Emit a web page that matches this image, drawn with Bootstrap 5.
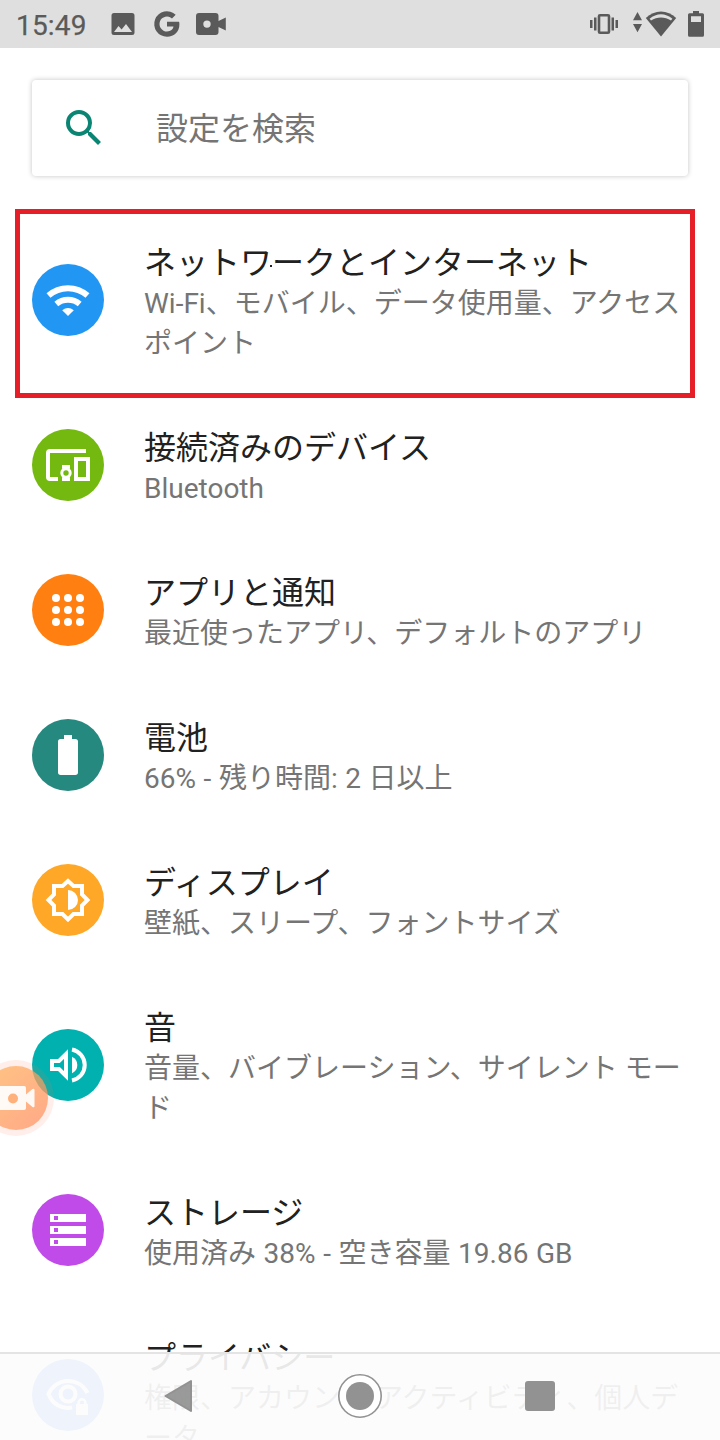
<!DOCTYPE html>
<html lang="ja">
<head>
<meta charset="utf-8">
<meta name="viewport" content="width=device-width, initial-scale=1">
<title>設定</title>
<link href="https://cdn.jsdelivr.net/npm/bootstrap@5.3.0/dist/css/bootstrap.min.css" rel="stylesheet">
<style>
body{font-family:Roboto,"Noto Sans CJK JP",sans-serif;background:#fff;color:#212121}
.screen{width:720px;height:1440px}
.statusbar{height:48px;background:#dfdfdf;color:#5a5a5a;padding:0 12px 0 16px}
.clock{font-size:28px;line-height:48px;font-weight:400;letter-spacing:.2px;width:95px;padding-top:3px;-webkit-text-stroke:.25px #5a5a5a}
svg{display:block;flex:none}
.searchbox{height:96px;margin:32px 32px 32px;border-radius:4px;box-shadow:0 0 5px rgba(0,0,0,.24);font-size:32px;color:#757575;padding-left:28px}
.searchbox svg{margin-right:48px}
.searchbox span{padding-top:2px}
.entry{padding-left:32px;height:145px}
.entry.tall{height:185px}
.disc{width:72px;height:72px;margin:0 40px 1px 0;flex:none;color:#fff}
.words{align-self:flex-start;padding-top:35px;white-space:nowrap}
.ttl{font-size:32px;line-height:40px;margin-bottom:1px}
.sub{font-size:28px;line-height:40px;color:#757575}
.spaced{word-spacing:.65px}
.marker{left:15px;top:209px;width:680px;height:189px;border:5px solid #e61e28}
.speck{left:270px;top:265px;width:2px;height:2px;background:#222}
.bubble{left:-22px;top:1060px}
.sysnav{left:0;bottom:0;height:88px;background:rgba(252,252,252,.91);border-top:2px solid #e4e4e4}
.sysnav svg{width:180px}
</style>
</head>
<body>
<div class="screen position-relative overflow-hidden">
<header class="statusbar d-flex align-items-center">
  <div class="clock">15:49</div>
  <svg width="120" height="48" viewBox="111 0 120 48" fill="currentColor">
    <path fill-rule="evenodd" d="M114 13h18a2.500 2.500 0 0 1 2.500 2.500v17a2.500 2.500 0 0 1-2.500 2.500h-18a2.500 2.500 0 0 1-2.500-2.500v-17a2.500 2.500 0 0 1 2.500-2.500zM114 32h18l-6-8-4.400 5.600-3.100-3.600z"/>
    <path d="M167 21.700h12.100q.3 1.300.3 2.600c0 7.600-5.100 12.400-12.400 12.400a12.700 12.700 0 1 1 8.700-21.900l-3.700 3.600a7.500 7.500 0 1 0-5 13.100c3.900 0 6-2.100 6.500-4.900H167z"/>
    <path fill-rule="evenodd" d="M199 13h16.500a3 3 0 0 1 3 3v5l7.300-3.600v13.200l-7.300-3.600v5a3 3 0 0 1-3 3H199a3 3 0 0 1-3-3V16a3 3 0 0 1 3-3zm8 7.400a3.700 3.700 0 1 0 0 7.400 3.700 3.700 0 0 0 0-7.400z"/>
  </svg>
  <svg class="ms-auto" width="120" height="48" viewBox="588 0 120 48" fill="currentColor">
    <path d="M590 20h2.500v8H590zM594 17.500h2.500v13H594zM611.500 17.500h2.500v13h-2.500zM615.500 20h2.500v8h-2.500z"/>
    <rect x="599" y="15.300" width="10" height="17.400" rx="1" fill="none" stroke="currentColor" stroke-width="2.600"/>
    <path d="M637.500 12l4.500 8.300h-9zM637.500 32.300L633 24h9z"/>
    <path d="M661 36.500L645.800 18c8.800-8.700 21.600-8.700 30.400 0z"/>
    <path d="M649.600 18.800c6.900-6 15.900-6 22.800 0l-1.400 1.700c-6.300-3.900-13.700-3.900-20 0z" fill="#dfdfdf"/>
    <path fill-rule="evenodd" d="M693 11h6v2.300h3.500q1.500 0 1.500 1.500v20.500q0 1.500-1.500 1.500h-13q-1.500 0-1.500-1.500V14.800q0-1.500 1.500-1.500h3.500zM691 16.200V22h10v-5.800z"/>
  </svg>
</header>

<div class="searchbox bg-white d-flex align-items-center">
  <svg width="48" height="48" viewBox="0 0 24 24" fill="#0b8573"><path d="M15.500 14h-.79l-.28-.27A6.471 6.471 0 0 0 16 9.500 6.500 6.500 0 1 0 9.500 16c1.610 0 3.090-.59 4.230-1.570l.27.28v.79l5 4.990L20.490 19l-4.990-5zm-6 0C7.010 14 5 11.990 5 9.500S7.010 5 9.500 5 14 7.010 14 9.500 11.990 14 9.500 14z"/></svg>
  <span>設定を検索</span>
</div>

<main>
  <section class="entry tall d-flex align-items-center">
    <svg class="disc" viewBox="0 0 72 72"><circle cx="36" cy="36" r="36" fill="#2196f3"/><g fill="none" stroke="#fff" stroke-width="6"><path d="M16.500 31.500a29.500 29.500 0 0 1 39 0M24.300 40a18.500 18.500 0 0 1 23.400 0"/></g><path d="M36 52l-5.800-5.800q5.800-4.400 11.600 0z" fill="#fff"/></svg>
    <div class="words"><div class="ttl">ネットワークとインターネット</div><div class="sub">Wi-Fi、モバイル、データ使用量、アクセス<br>ポイント</div></div>
  </section>
  <section class="entry d-flex align-items-center">
    <svg class="disc" viewBox="0 0 72 72"><circle cx="36" cy="36" r="36" fill="#73b90f"/><g fill="none" stroke="#fff" stroke-width="4"><path d="M54 22H18a2 2 0 0 0-2 2v24a2 2 0 0 0 2 2h8"/><rect x="44" y="30" width="12" height="20"/><circle cx="34" cy="44" r="4.200" stroke-width="3"/></g><path d="M30 36h8v4q-4-2-8 0zM30 52h8v-4q-4 2-8 0z" fill="#fff"/></svg>
    <div class="words"><div class="ttl">接続済みのデバイス</div><div class="sub">Bluetooth</div></div>
  </section>
  <section class="entry d-flex align-items-center">
    <svg class="disc" viewBox="0 0 72 72"><circle cx="36" cy="36" r="36" fill="#ff7f11"/><g fill="#fff"><circle cx="24" cy="24" r="4"/><circle cx="36" cy="24" r="4"/><circle cx="48" cy="24" r="4"/><circle cx="24" cy="36" r="4"/><circle cx="36" cy="36" r="4"/><circle cx="48" cy="36" r="4"/><circle cx="24" cy="48" r="4"/><circle cx="36" cy="48" r="4"/><circle cx="48" cy="48" r="4"/></g></svg>
    <div class="words"><div class="ttl">アプリと通知</div><div class="sub">最近使ったアプリ、デフォルトのアプリ</div></div>
  </section>
  <section class="entry d-flex align-items-center">
    <svg class="disc" viewBox="0 0 72 72"><circle cx="36" cy="36" r="36" fill="#26897f"/><path d="M32 16h8v4h3.300a2.700 2.700 0 0 1 2.700 2.700v30.600a2.700 2.700 0 0 1-2.700 2.700H28.700a2.700 2.700 0 0 1-2.700-2.700V22.700a2.700 2.700 0 0 1 2.700-2.700H32z" fill="#fff"/></svg>
    <div class="words"><div class="ttl">電池</div><div class="sub spaced">66% - 残り時間: 2 日以上</div></div>
  </section>
  <section class="entry d-flex align-items-center">
    <svg class="disc" viewBox="0 0 72 72"><circle cx="36" cy="36" r="36" fill="#ffa726"/><path d="M36 17l5.500 5.000H50V30.500L55.500 36 50 41.500V50H41.500L36 55.500 30.500 50H22V41.500L16.500 36 22 30.500V22H30.500z" fill="none" stroke="#fff" stroke-width="4"/><path d="M36 26a10 10 0 0 1 0 20z" fill="#fff"/></svg>
    <div class="words"><div class="ttl">ディスプレイ</div><div class="sub">壁紙、スリープ、フォントサイズ</div></div>
  </section>
  <section class="entry tall d-flex align-items-center">
    <svg class="disc" viewBox="0 0 72 72"><circle cx="36" cy="36" r="36" fill="#00b1b0"/><path d="M20 32h7l7-7v22l-7-7h-7z" fill="none" stroke="#fff" stroke-width="4"/><path d="M40 27.800a9 9 0 0 1 0 16.400z" fill="#fff"/><path d="M40 20.500a15.800 15.800 0 0 1 0 31" fill="none" stroke="#fff" stroke-width="4"/></svg>
    <div class="words"><div class="ttl">音</div><div class="sub">音量、バイブレーション、サイレント モー<br>ド</div></div>
  </section>
  <section class="entry d-flex align-items-center">
    <svg class="disc" viewBox="0 0 72 72"><circle cx="36" cy="36" r="36" fill="#c04be8"/><path fill="#fff" fill-rule="evenodd" d="M18 20h36v8H18zM22 22v4h4v-4zM18 32h36v8H18zM22 34v4h4v-4zM18 44h36v8H18zM22 46v4h4v-4z"/></svg>
    <div class="words"><div class="ttl">ストレージ</div><div class="sub spaced">使用済み 38% - 空き容量 19.86 GB</div></div>
  </section>
  <section class="entry tall d-flex align-items-center">
    <svg class="disc" viewBox="0 0 72 72"><circle cx="36" cy="36" r="36" fill="#679df6"/><g fill="none" stroke="#fff" stroke-width="4"><path d="M40 48.500C29 50.500 20 44.500 16.500 35 24 18 47 17.500 55.500 34"/><circle cx="36" cy="35" r="7.500"/></g><path fill="#fff" fill-rule="evenodd" d="M44 45h1.300v-1.300a4.700 4.700 0 0 1 9.400 0V45H56v11H44zm3.800 0h4.400v-1.300a2.200 2.200 0 0 0-4.400 0z"/></svg>
    <div class="words"><div class="ttl">プライバシー</div><div class="sub">権限、アカウント アクティビティ、個人デ<br>ータ</div></div>
  </section>
</main>

<div class="marker position-absolute"></div>
<i class="speck position-absolute"></i>
<svg class="bubble position-absolute" width="76" height="76" viewBox="0 0 76 76">
  <defs><linearGradient id="peach" x1="0" y1="0" x2="1" y2="1"><stop offset="0" stop-color="#ffb45c"/><stop offset="1" stop-color="#ff8d61"/></linearGradient></defs>
  <circle cx="38" cy="38" r="38" fill="#ff7048" fill-opacity=".12"/>
  <circle cx="38" cy="38" r="32" fill="url(#peach)" fill-opacity=".72"/>
  <path d="M18 26h28a2 2 0 0 1 2 2v6.500l6.500-5.500q2-1 2 1v16q0 2-2 1L48 41.500V48a2 2 0 0 1-2 2H18z" fill="#fff" fill-opacity=".92"/><circle cx="35" cy="38.500" r="5" fill="#ffb17b"/>
</svg>
<nav class="sysnav position-absolute w-100 d-flex justify-content-center">
  <svg height="86" viewBox="90 1354 180 86"><path d="M191 1381v30l-25.500-15z" fill="#929292" fill-opacity=".93" stroke="#929292" stroke-width="2" stroke-linejoin="round"/></svg>
  <svg height="86" viewBox="270 1354 180 86"><circle cx="360" cy="1396" r="21.200" fill="#fff" stroke="#929292" stroke-width="1.600"/><circle cx="360" cy="1396" r="14" fill="#929292"/></svg>
  <svg height="86" viewBox="450 1354 180 86"><rect x="525" y="1381" width="30" height="30" rx="3" fill="#929292"/></svg>
</nav>
</div>
<script src="https://cdn.jsdelivr.net/npm/bootstrap@5.3.0/dist/js/bootstrap.bundle.min.js"></script>
</body>
</html>
